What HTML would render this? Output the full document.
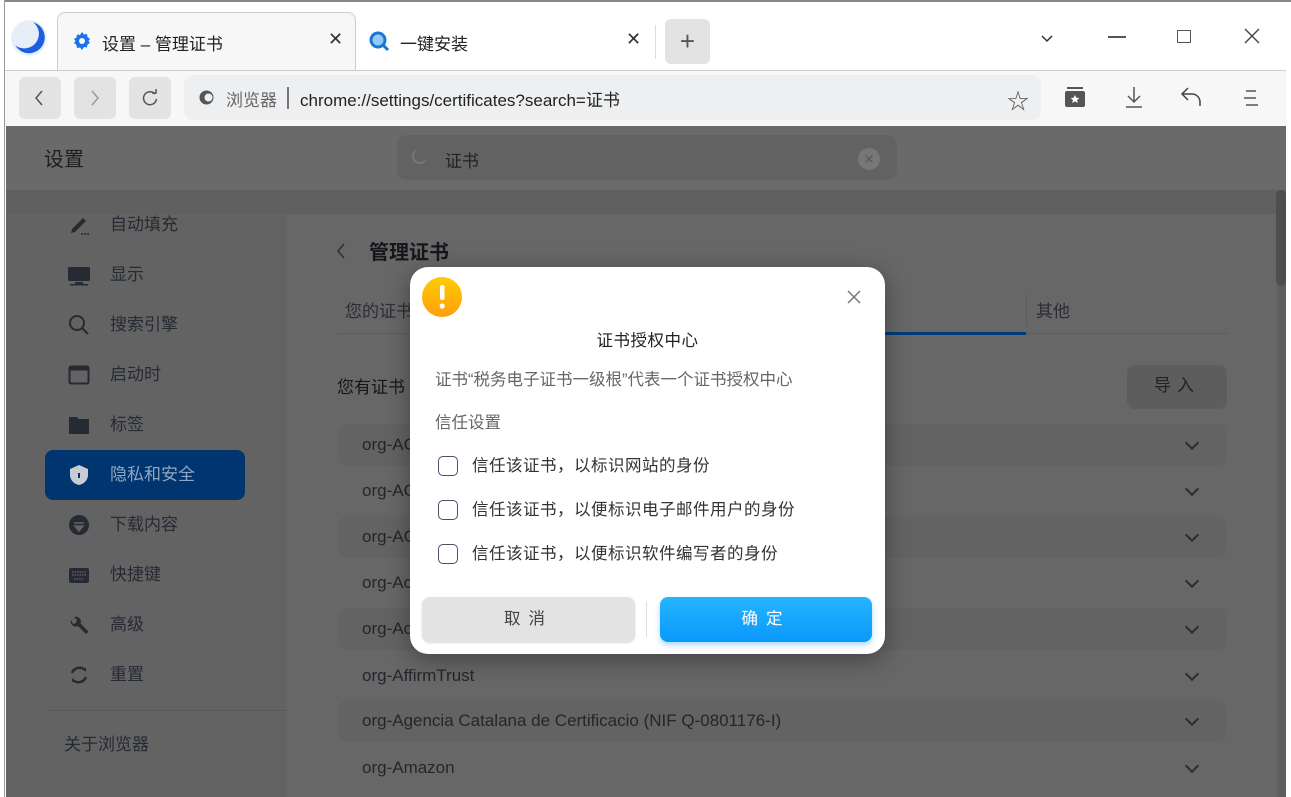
<!DOCTYPE html>
<html><head><meta charset="utf-8"><style>
*{box-sizing:border-box;margin:0;padding:0}
body{width:1291px;height:797px;overflow:hidden;position:relative;background:#fff;font-family:"Liberation Sans","Noto Sans CJK SC",sans-serif;color:#222}
.abs{position:absolute}
.tabbar{left:0;top:0;width:1291px;height:70px;background:#fff;border-top:2px solid #888}
.toolbar{left:5px;top:70px;width:1281px;height:56px;background:#f7f7f8;border-top:1px solid #ccc}
.btn{width:42px;height:42px;border-radius:6px;background:#e3e3e3;top:77px}
.page{left:6px;top:126px;width:1280px;height:671px;background:#666}
.sbi{left:110px;font-size:17px;color:#262a33}
.ico{left:68px;width:22px;height:22px}
.row{left:338px;width:889px;height:42px;border-radius:10px}
.row span{position:absolute;left:24px;top:11px;font-size:17px;color:#23262d}
.chev{position:absolute;right:30px;top:14px;width:10px;height:10px;border-right:2px solid #2a2d33;border-bottom:2px solid #2a2d33;transform:rotate(45deg)}
.dlg{left:410px;top:267px;width:475px;height:387px;background:#fff;border-radius:18px;box-shadow:0 6px 24px rgba(0,0,0,.35)}
.cb{position:absolute;left:28px;width:20px;height:20px;border:1.5px solid #4a5066;border-radius:5px}
.ct{position:absolute;left:62px;font-size:16.5px;color:#333;letter-spacing:.5px}
</style></head><body>
<div class="abs tabbar"></div>
<div class="abs" style="left:0;top:0;width:5px;height:797px;background:#fff;border-right:1px solid #999"></div>
<svg class="abs" style="left:9px;top:18px" width="40" height="40" viewBox="0 0 38 38"><circle cx="19" cy="19" r="17" fill="#e8eef8"/><path d="M6 26 A15 15 0 1 0 23 4 A13 13 0 0 1 6 26Z" fill="#1b5fe0"/><path d="M13 27 A12 12 0 0 0 34 14 A11 11 0 0 1 13 27Z" fill="#19b5ff"/></svg>
<div class="abs" style="left:57px;top:12px;width:299px;height:58px;background:#f7f7f8;border:1px solid #ccc;border-bottom:none;border-radius:8px 8px 0 0"></div>
<svg class="abs" style="left:72px;top:31px" width="20" height="20" viewBox="0 0 20 20"><path d="M10 1l2 2.5 3-.5.5 3L18 8l-1.5 2L18 12l-2.5 1.5-.5 3-3-.5L10 19l-2-2.5-3 .5-.5-3L2 12l1.5-2L2 8l2.5-1.5.5-3 3 .5z" fill="#1a73e8"/><circle cx="10" cy="10" r="3" fill="#f7f7f8"/></svg>
<div class="abs" style="left:102px;top:30px;font-size:17px">设置 – 管理证书</div>
<div class="abs" style="left:328px;top:29px;font-size:18px;color:#333">✕</div>
<svg class="abs" style="left:368px;top:30px" width="22" height="22" viewBox="0 0 22 22"><circle cx="10" cy="10" r="8.5" fill="#1976d2"/><circle cx="10" cy="10" r="5.5" fill="#90caf9"/><path d="M15 15l5 5" stroke="#1976d2" stroke-width="3"/></svg>
<div class="abs" style="left:400px;top:30px;font-size:17px">一键安装</div>
<div class="abs" style="left:626px;top:29px;font-size:18px;color:#333">✕</div>
<div class="abs" style="left:655px;top:25px;width:1px;height:34px;background:#ddd"></div>
<div class="abs" style="left:665px;top:19px;width:45px;height:45px;border-radius:6px;background:#e3e3e3;font-size:26px;color:#555;text-align:center;line-height:44px">+</div>
<svg class="abs" style="left:1040px;top:34px" width="14" height="10"><path d="M2 2l5 5 5-5" stroke="#333" stroke-width="1.5" fill="none"/></svg>
<div class="abs" style="left:1108px;top:36px;width:18px;height:1.5px;background:#555"></div>
<div class="abs" style="left:1177px;top:30px;width:14px;height:13px;border:1.5px solid #555"></div>
<svg class="abs" style="left:1244px;top:28px" width="16" height="16"><path d="M1 1l14 14M15 1L1 15" stroke="#444" stroke-width="1.4"/></svg>
<div class="abs toolbar"></div>
<div class="abs btn" style="left:19px"></div><div class="abs btn" style="left:74px"></div><div class="abs btn" style="left:129px"></div>
<svg class="abs" style="left:33px;top:89px" width="12" height="18"><path d="M9 2L3 9l6 7" stroke="#555" stroke-width="1.5" fill="none"/></svg>
<svg class="abs" style="left:89px;top:89px" width="12" height="18"><path d="M3 2l6 7-6 7" stroke="#999" stroke-width="1.5" fill="none"/></svg>
<svg class="abs" style="left:141px;top:89px" width="18" height="18"><path d="M14 5A6.5 6.5 0 1 0 15.5 10" stroke="#555" stroke-width="1.5" fill="none"/><path d="M11 4h4V0" stroke="#555" stroke-width="1.5" fill="none"/></svg>
<div class="abs" style="left:184px;top:75px;width:857px;height:45px;border-radius:10px;background:#eeeff1"></div>
<svg class="abs" style="left:198px;top:89px" width="17" height="17"><circle cx="8.5" cy="8.5" r="7" fill="#555"/><circle cx="10.5" cy="8.5" r="4" fill="#eeeff1"/></svg>
<div class="abs" style="left:226px;top:86px;font-size:17px;color:#666">浏览器</div>
<div class="abs" style="left:287px;top:87px;width:1.5px;height:22px;background:#777"></div>
<div class="abs" style="left:300px;top:86px;font-size:17px;color:#222">chrome://settings/certificates?search=证书</div>
<div class="abs" style="left:1007px;top:84px;font-size:22px;color:#555">☆</div>
<svg class="abs" style="left:1064px;top:86px" width="22" height="22"><rect x="3" y="1" width="16" height="2" fill="#555"/><rect x="1" y="5" width="20" height="16" rx="2" fill="#555"/><path d="M11 9l1.3 2.7 3 .3-2.2 2 .7 3-2.8-1.6-2.8 1.6.7-3-2.2-2 3-.3z" fill="#fff"/></svg>
<svg class="abs" style="left:1124px;top:86px" width="20" height="22"><path d="M10 1v15M4 10l6 6 6-6M2 21h16" stroke="#555" stroke-width="1.5" fill="none"/></svg>
<svg class="abs" style="left:1180px;top:86px" width="24" height="22"><path d="M8 2L2 8l6 6M2 8h10a8 8 0 0 1 8 8v4" stroke="#444" stroke-width="1.5" fill="none"/></svg>
<svg class="abs" style="left:1243px;top:90px" width="16" height="16"><path d="M3 1h10M1 8h12M3 15h12" stroke="#555" stroke-width="1.4"/></svg>
<div class="abs page"></div>
<div class="abs" style="left:6px;top:126px;width:1280px;height:64px;background:#6a6a6a"></div>
<div class="abs" style="left:6px;top:190px;width:1280px;height:24px;background:#606060"></div>
<div class="abs" style="left:6px;top:214px;width:281px;height:583px;background:#636363"></div>
<div class="abs" style="left:287px;top:214px;width:990px;height:583px;background:#676767"></div>
<div class="abs" style="left:1277px;top:190px;width:9px;height:607px;background:#5f5f5f"></div>
<div class="abs" style="left:1276px;top:190px;width:10px;height:96px;border-radius:5px;background:#4e4e4e"></div>
<div class="abs" style="left:44px;top:143px;font-size:20px;color:#1c1e22">设置</div>
<div class="abs" style="left:397px;top:135px;width:500px;height:45px;border-radius:10px;background:#626262"></div>
<div class="abs" style="left:412px;top:148px;width:16px;height:16px;border-radius:50%;border-left:2px solid #777;border-bottom:2px solid #777"></div>
<div class="abs" style="left:445px;top:147px;font-size:17px;color:#222">证书</div>
<div class="abs" style="left:858px;top:148px;width:22px;height:22px;border-radius:50%;background:#777;color:#5a5a5a;font-size:14px;text-align:center;line-height:22px">✕</div>
<svg class="abs ico" style="top:214px" viewBox="0 0 22 22"><path d="M3 19l1-4L15 4l3 3L7 18z" fill="#262a33"/><circle cx="14" cy="20" r="1" fill="#262a33"/><circle cx="17" cy="20" r="1" fill="#262a33"/><circle cx="20" cy="20" r="1" fill="#262a33"/></svg>
<div class="abs sbi" style="top:210px">自动填充</div>
<svg class="abs ico" style="top:264px" viewBox="0 0 22 22"><rect x="0" y="3" width="22" height="14" rx="1.5" fill="#262a33"/><rect x="7" y="18" width="8" height="2" fill="#262a33"/><rect x="2" y="20" width="18" height="1.5" fill="#262a33"/></svg>
<div class="abs sbi" style="top:260px">显示</div>
<svg class="abs ico" style="top:314px" viewBox="0 0 22 22"><circle cx="9" cy="9" r="7" stroke="#262a33" stroke-width="2" fill="none"/><path d="M14 14l6 6" stroke="#262a33" stroke-width="2.2"/></svg>
<div class="abs sbi" style="top:310px">搜索引擎</div>
<svg class="abs ico" style="top:364px" viewBox="0 0 22 22"><rect x="1.5" y="2.5" width="19" height="17" rx="1.5" stroke="#262a33" stroke-width="2" fill="none"/><rect x="1.5" y="2.5" width="19" height="4" fill="#262a33"/></svg>
<div class="abs sbi" style="top:360px">启动时</div>
<svg class="abs ico" style="top:414px" viewBox="0 0 22 22"><path d="M1 3h8l2 2h10v15H1z" fill="#262a33"/></svg>
<div class="abs sbi" style="top:410px">标签</div>
<div class="abs" style="left:45px;top:450px;width:200px;height:50px;border-radius:8px;background:#003570"></div>
<svg class="abs ico" style="top:464px" viewBox="0 0 22 22"><path d="M11 1l9 4v6c0 5-4 9-9 10-5-1-9-5-9-10V5z" fill="#c8ccd4"/><rect x="10" y="9" width="2" height="5" fill="#003570"/></svg>
<div class="abs sbi" style="top:460px;color:#8fa6c4">隐私和安全</div>
<svg class="abs ico" style="top:514px" viewBox="0 0 22 22"><circle cx="11" cy="11" r="10" fill="#262a33"/><path d="M6 9h10M7 12h8l-4 5z" stroke="#636363" stroke-width="1.5" fill="#636363"/></svg>
<div class="abs sbi" style="top:510px">下载内容</div>
<svg class="abs ico" style="top:564px" viewBox="0 0 22 22"><rect x="1" y="4" width="20" height="15" rx="2" fill="#262a33"/><path d="M4 8h14M4 11h14M6 15h10" stroke="#636363" stroke-width="1.2" stroke-dasharray="1.5 1"/></svg>
<div class="abs sbi" style="top:560px">快捷键</div>
<svg class="abs ico" style="top:614px" viewBox="0 0 22 22"><path d="M3 6a5 5 0 0 0 7 6l8 8 2.5-2.5-8-8A5 5 0 0 0 6 3l3 3-1 3-3 1z" fill="#262a33"/></svg>
<div class="abs sbi" style="top:610px">高级</div>
<svg class="abs ico" style="top:664px" viewBox="0 0 22 22"><path d="M17 6A8 8 0 0 0 4 9M5 16a8 8 0 0 0 13-3" stroke="#262a33" stroke-width="2.5" fill="none"/><path d="M14 4l4 0 0 4zM8 18l-4 0 0-4z" fill="#262a33"/></svg>
<div class="abs sbi" style="top:660px">重置</div>
<div class="abs" style="left:45px;top:710px;width:242px;height:1px;background:#595959"></div>
<div class="abs sbi" style="left:64px;top:730px">关于浏览器</div>
<svg class="abs" style="left:335px;top:242px" width="12" height="18"><path d="M9 2L3 9l6 7" stroke="#2a2d33" stroke-width="1.5" fill="none"/></svg>
<div class="abs" style="left:369px;top:236px;font-size:20px;font-weight:bold;color:#15171b">管理证书</div>
<div class="abs" style="left:345px;top:297px;font-size:17px;color:#2a2d33">您的证书</div>
<div class="abs" style="left:1036px;top:297px;font-size:17px;color:#2a2d33">其他</div>
<div class="abs" style="left:1026px;top:293px;width:1px;height:34px;background:#5c5c5c"></div>
<div class="abs" style="left:337px;top:333px;width:891px;height:1px;background:#5c5c5c"></div>
<div class="abs" style="left:870px;top:332px;width:156px;height:3px;background:#003a78"></div>
<div class="abs" style="left:337px;top:373px;font-size:17px;color:#15171b">您有证书</div>
<div class="abs" style="left:1127px;top:365px;width:100px;height:44px;border-radius:8px;background:#5d5d5d;font-size:17px;color:#222;text-align:center;line-height:42px;letter-spacing:6px">导入</div>
<div class="abs row" style="top:424px;background:#636363"><span>org-AC</span><i class="chev"></i></div>
<div class="abs row" style="top:470px"><span>org-AC</span><i class="chev"></i></div>
<div class="abs row" style="top:516px;background:#636363"><span>org-AC</span><i class="chev"></i></div>
<div class="abs row" style="top:562px"><span>org-Ac</span><i class="chev"></i></div>
<div class="abs row" style="top:608px;background:#636363"><span>org-Ac</span><i class="chev"></i></div>
<div class="abs row" style="top:655px"><span>org-AffirmTrust</span><i class="chev"></i></div>
<div class="abs row" style="top:700px;background:#636363"><span>org-Agencia Catalana de Certificacio (NIF Q-0801176-I)</span><i class="chev"></i></div>
<div class="abs row" style="top:747px"><span>org-Amazon</span><i class="chev"></i></div>
<div class="abs dlg">
 <svg style="position:absolute;left:12px;top:10px" width="40" height="40"><defs><linearGradient id="g" x1="0" y1="0" x2="0" y2="1"><stop offset="0" stop-color="#ffcb05"/><stop offset="1" stop-color="#ff9f0a"/></linearGradient></defs><circle cx="20" cy="20" r="20" fill="url(#g)"/><rect x="18" y="8" width="4.5" height="15" rx="2" fill="#fff"/><circle cx="20.2" cy="29" r="2.6" fill="#fff"/></svg>
 <svg style="position:absolute;left:437px;top:23px" width="14" height="14"><path d="M1 1l12 12M13 1L1 13" stroke="#777" stroke-width="1.5"/></svg>
 <div style="position:absolute;left:0;width:475px;top:60px;text-align:center;font-size:16.5px;color:#222;letter-spacing:.5px">证书授权中心</div>
 <div style="position:absolute;left:25px;top:99px;font-size:16.5px;color:#666">证书“税务电子证书一级根”代表一个证书授权中心</div>
 <div style="position:absolute;left:25px;top:142px;font-size:16.5px;color:#666">信任设置</div>
 <div class="cb" style="top:189px"></div><div class="ct" style="top:185px">信任该证书，以标识网站的身份</div>
 <div class="cb" style="top:233px"></div><div class="ct" style="top:229px">信任该证书，以便标识电子邮件用户的身份</div>
 <div class="cb" style="top:277px"></div><div class="ct" style="top:273px">信任该证书，以便标识软件编写者的身份</div>
 <div style="position:absolute;left:12px;top:330px;width:213px;height:45px;border-radius:8px;background:#e3e3e4;box-shadow:0 1px 2px rgba(0,0,0,.15);text-align:center;line-height:44px;font-size:16.5px;color:#444;letter-spacing:8px">取消</div>
 <div style="position:absolute;left:236px;top:334px;width:1px;height:36px;background:#ddd"></div>
 <div style="position:absolute;left:250px;top:330px;width:212px;height:45px;border-radius:8px;background:linear-gradient(#26b5ff,#0a98fb);box-shadow:0 3px 6px rgba(10,150,250,.35);text-align:center;line-height:44px;font-size:16.5px;color:#fff;letter-spacing:8px">确定</div>
</div>
</body></html>
